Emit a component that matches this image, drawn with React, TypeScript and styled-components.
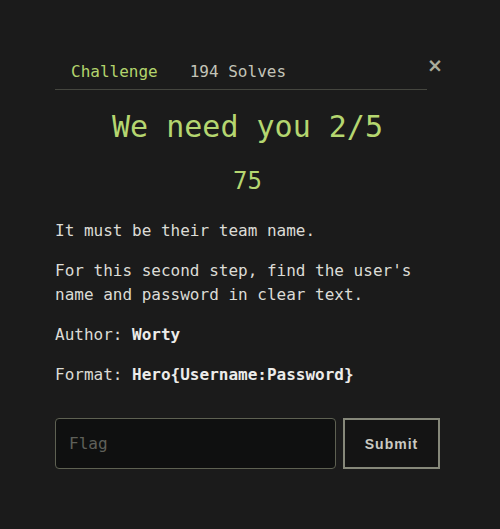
import React from "react";
import styled, { createGlobalStyle } from "styled-components";

const Global = createGlobalStyle`
  html, body { margin: 0; padding: 0; background: #1b1b1b; }
  body { font-family: "DejaVu Sans Mono", monospace; color: #dcdcd6; }
`;

const Modal = styled.div`
  width: 385px;
  margin-left: 55px;
  padding-top: 52px;
  display: flex;
  flex-direction: column;
`;

const Header = styled.div`
  display: flex;
  align-items: flex-start;
`;

const Tabs = styled.nav`
  flex: 1;
  display: flex;
  border-bottom: 1px solid #45463f;
  padding-bottom: 5px;
  padding-left: 16px;
  gap: 32px;
  margin-top: 8px;
`;

const Tab = styled.span<{ $active?: boolean }>`
  font-size: 16px;
  line-height: 24px;
  color: ${(p) => (p.$active ? "#b3d46d" : "#c3c4b8")};
`;

const Close = styled.button`
  width: 13px;
  height: 26px;
  padding: 0;
  margin: 0;
  border: none;
  background: transparent;
  color: #a9ab9b;
  font-family: "DejaVu Sans", sans-serif;
  font-size: 19px;
  font-weight: bold;
  line-height: 26px;
  text-align: center;
  cursor: pointer;
`;

const Title = styled.h2`
  margin: 19px 0 0;
  text-align: center;
  font-size: 30px;
  line-height: 36px;
  font-weight: normal;
  color: #b5d670;
`;

const Value = styled.h3`
  margin: 22px 0 0;
  text-align: center;
  font-size: 24px;
  line-height: 29px;
  font-weight: normal;
  color: #b5d670;
`;

const Description = styled.div`
  margin-top: 23px;
`;

const P = styled.p`
  margin: 0 0 16px;
  font-size: 16px;
  line-height: 24px;
  color: #dcdcd6;
  b { font-weight: bold; color: #ececea; }
`;

const Form = styled.form`
  margin-top: 15px;
  display: flex;
  gap: 7px;
`;

const Input = styled.input`
  box-sizing: border-box;
  width: 281px;
  height: 51px;
  padding: 0 13px;
  background: #0f1010;
  border: 1px solid #5e6152;
  border-radius: 4px;
  color: #dcdcd6;
  font-family: "DejaVu Sans Mono", monospace;
  font-size: 16px;
  outline: none;
  &::placeholder { color: #5f605a; }
`;

const Submit = styled.button`
  box-sizing: border-box;
  width: 97px;
  height: 51px;
  background: #141414;
  border: 2px solid #86887a;
  color: #cacac2;
  font-family: "Liberation Sans", Arial, sans-serif;
  font-weight: bold;
  font-size: 14px;
  letter-spacing: 1px;
  cursor: pointer;
`;

export default function App() {
  return (
    <>
      <Global />
      <Modal>
        <Header>
          <Tabs>
            <Tab $active>Challenge</Tab>
            <Tab>194 Solves</Tab>
          </Tabs>
          <Close aria-label="Close">×</Close>
        </Header>
        <Title>We need you 2/5</Title>
        <Value>75</Value>
        <Description>
          <P>It must be their team name.</P>
          <P>For this second step, find the user's name and password in clear text.</P>
          <P>
            Author: <b>Worty</b>
          </P>
          <P>
            Format: <b>Hero{"{"}Username:Password{"}"}</b>
          </P>
        </Description>
        <Form onSubmit={(e) => e.preventDefault()}>
          <Input placeholder="Flag" />
          <Submit type="submit">Submit</Submit>
        </Form>
      </Modal>
    </>
  );
}
